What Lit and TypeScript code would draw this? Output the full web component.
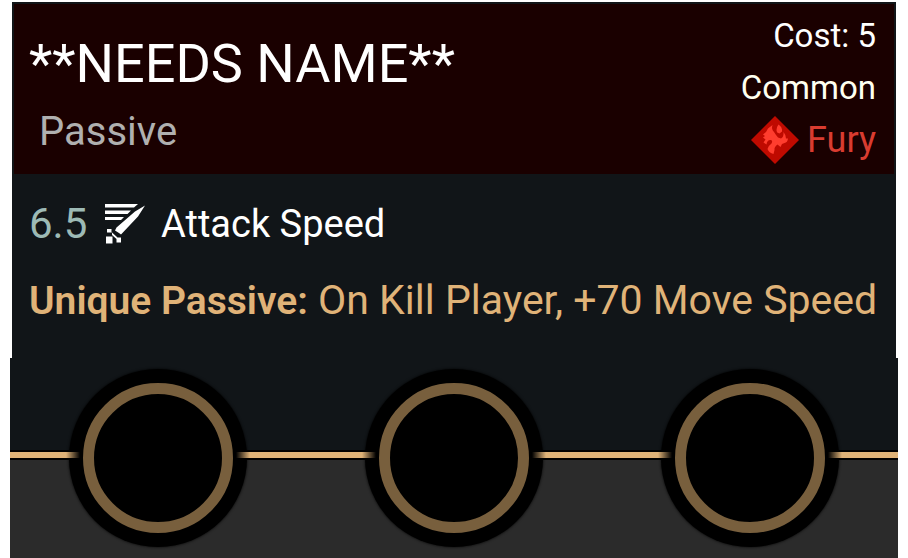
import { LitElement, html, css, svg } from "lit";
import { customElement } from "lit/decorators.js";

const furyIcon = svg`
  <svg class="fury-icon" viewBox="0 0 48 48" aria-hidden="true">
    <path fill="#bf0a00" d="M24 0 48 24 24 48 0 24Z" />
    <path fill="#ff3d2e" d="M12 18.500 15 16 17 12.500 21.500 9 Q20 13 23 16 L25 19 27 21.500 30 22.500 Q33 21 32.500 16 Q35 19 35 22.500 L37 22.500 Q36.500 26.500 33.500 27 L31 28 29.500 31 26.500 28.500 Q23 31 23.500 34 L22.500 38 Q18 37 16.500 33 Q17 30 20.500 27.500 Q22 25 20 24 Q16 23.500 15.500 28.500 L12.500 26.500 14.500 23.500 12 21.500 14 20Z" />
    <path fill="#ff3d2e" d="M27.500 8.500 Q31.500 11 31 15.500 L28.500 17.500 Q25.500 17 25.500 14 Q25.500 11 27.500 8.500Z" />
  </svg>`;

const swordIcon = svg`
  <svg class="sword-icon" viewBox="0 0 42 42" aria-hidden="true">
    <g fill="#fff">
      <path d="M1 1H34L30 4.500H1ZM1 7.500H27L23.500 11H1ZM1 14H20L17 17H1Z" />
      <path d="M41 2.500 34 13.500 17 31.500 15 30 11 27.500 12.500 24.500 31 8.500Z" />
      <path d="M3 26H7.500V29L13.500 34.500H17V39.500H12.500V36L8 32V29.500H3ZM2 33.500H8.500V40.500H2Z" />
    </g>
  </svg>`;

@customElement("app-root")
export class AppRoot extends LitElement {
  static styles = css`
    :host {
      display: block;
      padding-top: 2px;
      background: #fff;
      color: #fff;
      font-family: Roboto, "Liberation Sans", sans-serif;
      font-weight: 400;
    }
    h1, p { margin: 0; font-weight: inherit; }
    .item {
      margin: 0 12px;
      padding: 2px;
      background: #111518;
    }
    .head {
      display: flex;
      justify-content: space-between;
      background: #1a0000;
      padding: 6px 18px 8px 15px;
    }
    .title {
      font-size: 54px;
      line-height: 64px;
      padding-top: 22px;
      white-space: nowrap;
    }
    .kind {
      font-size: 40px;
      line-height: 52px;
      padding: 10px 0 0 10px;
      color: #b0b0b0;
    }
    .meta {
      display: flex;
      flex-direction: column;
      align-items: flex-end;
      font-size: 33px;
      line-height: 52px;
    }
    .common { color: #fffff0; }
    .tree {
      display: flex;
      align-items: center;
      gap: 8px;
      font-size: 36px;
      color: #d93c30;
    }
    .fury-icon { width: 48px; height: 48px; }
    .body {
      padding: 24px 14px 29px 15px;
      font-size: 38px;
      line-height: 52px;
      white-space: nowrap;
    }
    .stat { display: flex; align-items: center; gap: 15px; }
    .value { min-width: 60px; font-size: 42px; color: #9dbab5; }
    .sword-icon { width: 42px; height: 42px; }
    .effect { margin-top: 24px; font-size: 41px; color: #e0b378; }
    .effect b { font-size: 39px; font-weight: 600; }
    .sockets {
      display: grid;
      grid-template-columns: repeat(3, 1fr);
      margin: 0 10px;
      background: linear-gradient(#111518 92px, #000 92px 102px, #2b2b2b 102px);
    }
    .socket {
      position: relative;
      display: grid;
      place-items: center;
      height: 200px;
    }
    .socket::before {
      content: "";
      grid-area: 1 / 1;
      width: 178px;
      height: 178px;
      border-radius: 50%;
      background: #000;
      box-shadow: 0 0 3px #000;
    }
    .socket::after {
      content: "";
      position: absolute;
      inset: 94px 0 auto;
      height: 6px;
      background: linear-gradient(
        90deg,
        #e0b378 calc(50% - 92px),
        #000 calc(50% - 78px) calc(50% + 78px),
        #e0b378 calc(50% + 92px)
      );
    }
    .ring {
      grid-area: 1 / 1;
      z-index: 1;
      box-sizing: border-box;
      width: 150px;
      height: 150px;
      border: 11px solid #785f3d;
      border-radius: 50%;
      background: #000;
    }
  `;

  render() {
    return html`
      <section class="item">
        <header class="head">
          <div>
            <h1 class="title">**NEEDS NAME**</h1>
            <p class="kind">Passive</p>
          </div>
          <div class="meta">
            <p>Cost: 5</p>
            <p class="common">Common</p>
            <p class="tree">${furyIcon}<span>Fury</span></p>
          </div>
        </header>
        <div class="body">
          <p class="stat"><span class="value">6.5</span>${swordIcon}<span>Attack Speed</span></p>
          <p class="effect"><b>Unique Passive:</b> On Kill Player, +70 Move Speed</p>
        </div>
      </section>
      <div class="sockets">
        ${[1, 2, 3].map(() => html`<div class="socket"><div class="ring"></div></div>`)}
      </div>
    `;
  }
}
